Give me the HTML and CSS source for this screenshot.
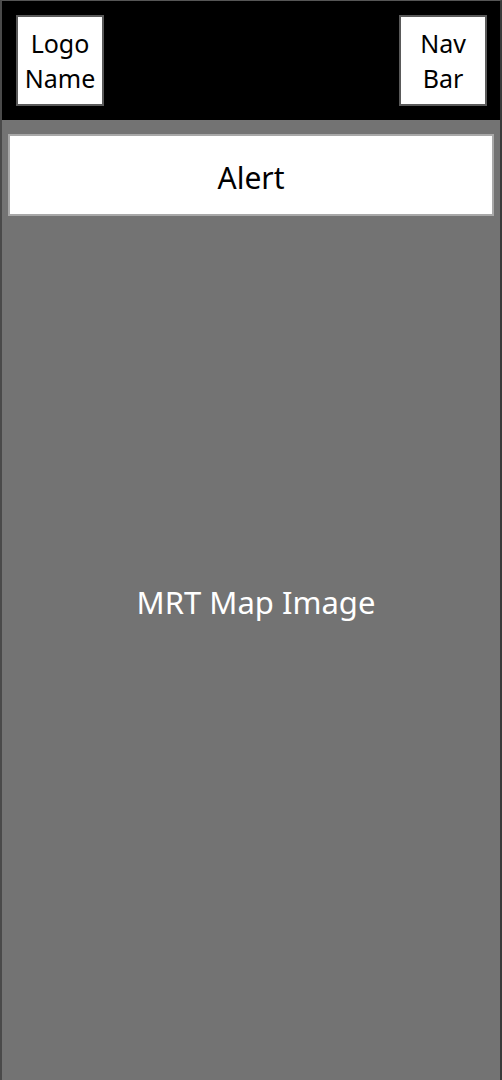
FILE: index.html
```html
<!DOCTYPE html>
<html>
<head>
<meta charset="utf-8">
<link rel="stylesheet" href="styles.css">
</head>
<body>
<div class="frame">
  <header class="header">
    <div class="box">Logo<br>Name</div>
    <div class="box">Nav<br>Bar</div>
  </header>
  <main class="content">
    <div class="alert">Alert</div>
    <div class="map">MRT Map Image</div>
  </main>
</div>
</body>
</html>
```
FILE: styles.css
```css
html, body {
  margin: 0;
  padding: 0;
  height: 100%;
}
body {
  background: #737373;
  font-family: "Noto Sans", "Open Sans", sans-serif;
}
.frame {
  height: 1080px;
  box-sizing: border-box;
  border-left: 2px solid #4a4a4a;
  border-right: 2px solid #3a3a3a;
  border-top: 1px solid #555;
  display: flex;
  flex-direction: column;
}
.header {
  background: #000;
  height: 119px;
  box-sizing: border-box;
  padding: 14px 13px 0 14px;
  display: flex;
  justify-content: space-between;
  align-items: flex-start;
}
.box {
  width: 88px;
  height: 91px;
  box-sizing: border-box;
  background: #fff;
  border: 2px solid #5a5a5a;
  color: #000;
  font-size: 25px;
  line-height: 35px;
  text-align: center;
  display: flex;
  align-items: center;
  justify-content: center;
}
.content {
  flex: 1;
  padding: 14px 6px 0 6px;
  display: flex;
  flex-direction: column;
}
.alert {
  height: 82px;
  box-sizing: border-box;
  background: #fff;
  border: 2px solid #a8a8a8;
  font-size: 30px;
  color: #000;
  padding-top: 4px;
  display: flex;
  align-items: center;
  justify-content: center;
}
.map {
  padding-top: 366px;
  padding-left: 10px;
  text-align: center;
  color: #fff;
  font-size: 31px;
  line-height: 40px;
}
```
